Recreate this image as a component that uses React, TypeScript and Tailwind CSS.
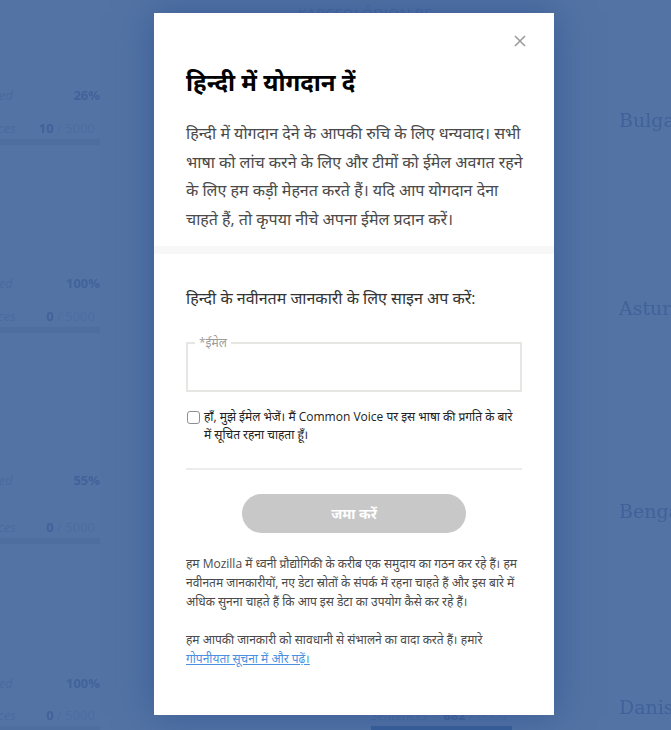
import React from "react";

const rows = [
  { h: "h-[182px]", gap: "mt-[13px]", names: ["Belarusian", "Breton", "Bulgarian"], pct: ["26%", "62%", "40%"], done: ["10", "120", "0"] },
  { h: "h-[194px]", gap: "mt-[13px]", names: ["Arabic", "Armenian", "Asturian"], pct: ["100%", "80%", "12%"], done: ["0", "45", "0"] },
  { h: "h-[213px]", gap: "mt-[27px]", names: ["Basque", "Bashkir", "Bengali"], pct: ["55%", "100%", "8%"], done: ["0", "300", "0"] },
  { h: "h-[178px]", gap: "mt-[12px]", names: ["Chuvash", "Corsican", "Danish"], pct: ["100%", "71%", "3%"], done: ["0", "882", "0"] },
];

function Stats({ pct, done, gap }: { pct: string; done: string; gap: string }) {
  const fill = Math.min(100, (parseInt(done, 10) / 5000) * 100 * 6);
  return (
    <div className="ml-[164px] flex-1 whitespace-nowrap text-[13px] leading-[20px]">
      <div className="flex justify-between">
        <span className="italic text-[#4a6a9f]">Recorded</span>
        <span className="font-bold text-[#42629a]">{pct}</span>
      </div>
      <div className={`flex justify-between pr-[5px] ${gap}`}>
        <span className="italic text-[#4a6a9f]">Sentences</span>
        <span className="text-[#4d6da1]">
          <b className="text-[#42629a]">{done}</b> / 5000
        </span>
      </div>
      <div className="mt-[1px] h-[6px] bg-[#4e6e9f]">
        <div className="h-full bg-[#3a5f99]" style={{ width: `${fill}%` }} />
      </div>
    </div>
  );
}

export default function App() {
  return (
    <div className="relative h-[730px] overflow-hidden bg-[#5373a4] font-['Open_Sans','Noto_Sans_Devanagari','Noto_Sans',sans-serif]">
      {/* dimmed page behind the dialog */}
      <div className="blur-[0.5px]">
        <div className="h-[24px] pl-[298px] pt-[3px] text-[14px] uppercase tracking-[0.5px] text-[#4766a0]">
          Kapcsolódjon be
        </div>
        <div className="-ml-[205px] w-[1130px]">
          {rows.map((row, i) => (
            <div key={i} className={`grid grid-cols-[305px_305px_305px] gap-x-[107px] ${row.h}`}>
              {row.names.map((name, c) => (
                <div key={name} className="flex items-center">
                  <div className="w-0 pt-[10px]">
                    <span className="font-['DejaVu_Serif',serif] text-[19px] whitespace-nowrap text-[#41619a]">{name}</span>
                  </div>
                  <Stats pct={row.pct[c]} done={row.done[c]} gap={row.gap} />
                </div>
              ))}
            </div>
          ))}
        </div>
      </div>

      {/* dialog */}
      <div className="absolute inset-0 flex justify-center pl-[37px] pt-[13px]">
        <div className="relative h-[702px] w-[400px] bg-white shadow-[0_0_36px_rgba(36,72,140,0.55)]">
          <button type="button" className="absolute right-[27px] top-[21px] p-[1px] text-[#9b9b9b]" aria-label="Close">
            <svg width="12" height="12" viewBox="0 0 12 12" stroke="currentColor" strokeWidth="1.6">
              <path d="M1 1L11 11M11 1L1 11" />
            </svg>
          </button>

          <div className="pb-[13px] pl-[32px] pr-[26px] pt-[53px]">
            <h2 className="text-[24px] font-bold leading-[32px] text-black">हिन्दी में योगदान दें</h2>
            <p className="mt-[21px] text-[16px] leading-[28.5px] text-[#4a4a4a]">
              हिन्दी में योगदान देने के आपकी रुचि के लिए धन्यवाद। सभी भाषा को लांच करने के लिए और टीमों को ईमेल अवगत रहने के लिए हम कड़ी मेहनत करते हैं। यदि आप योगदान देना चाहते हैं, तो कृपया नीचे अपना ईमेल प्रदान करें।
            </p>
          </div>

          <div className="h-[8px] bg-[#f7f7f7]" />

          <div className="px-[32px] pt-[32px]">
            <p className="text-[16px] leading-[24px] text-[#333]">हिन्दी के नवीनतम जानकारी के लिए साइन अप करें:</p>

            <fieldset className="mt-[26px] border-2 border-[#e8e6e3]">
              <legend className="ml-[7px] px-[4px] text-[12px] leading-[14px] text-[#9b9b9b]">*ईमेल</legend>
              <input type="email" className="block h-[40px] w-full px-[12px] text-[14px] outline-none" />
            </fieldset>

            <label className="mt-[16px] flex gap-[4px] text-[12px] leading-[18px] text-[#222]">
              <input
                type="checkbox"
                className="ml-[1px] mt-[3px] h-[13px] w-[13px] shrink-0 appearance-none rounded-[3px] border border-[#8f8f8f] bg-white"
              />
              <span>हाँ, मुझे ईमेल भेजें। मैं Common Voice पर इस भाषा की प्रगति के बारे में सूचित रहना चाहता हूँ।</span>
            </label>

            <div className="mt-[24px] h-[2px] bg-[#ececec]" />

            <div className="mt-[24px] flex justify-center">
              <button
                type="button"
                disabled
                className="h-[39px] w-[224px] rounded-full bg-[#c8c8c8] text-[14px] font-bold text-white"
              >
                जमा करें
              </button>
            </div>

            <p className="mt-[21px] text-[12px] leading-[19px] text-[#4a4a4a]">
              हम Mozilla में ध्वनी प्रौद्योगिकी के करीब एक समुदाय का गठन कर रहे हैं। हम नवीनतम जानकारीयों, नए डेटा स्रोतों के संपर्क में रहना चाहते हैं और इस बारे में अधिक सुनना चाहते हैं कि आप इस डेटा का उपयोग कैसे कर रहे हैं।
            </p>
            <p className="mt-[19px] text-[12px] leading-[19px] text-[#4a4a4a]">
              हम आपकी जानकारी को सावधानी से संभालने का वादा करते हैं। हमारे{" "}
              <a href="#" className="text-[#4a90e2] underline">
                गोपनीयता सूचना में और पढ़ें।
              </a>
            </p>
          </div>
        </div>
      </div>
    </div>
  );
}
